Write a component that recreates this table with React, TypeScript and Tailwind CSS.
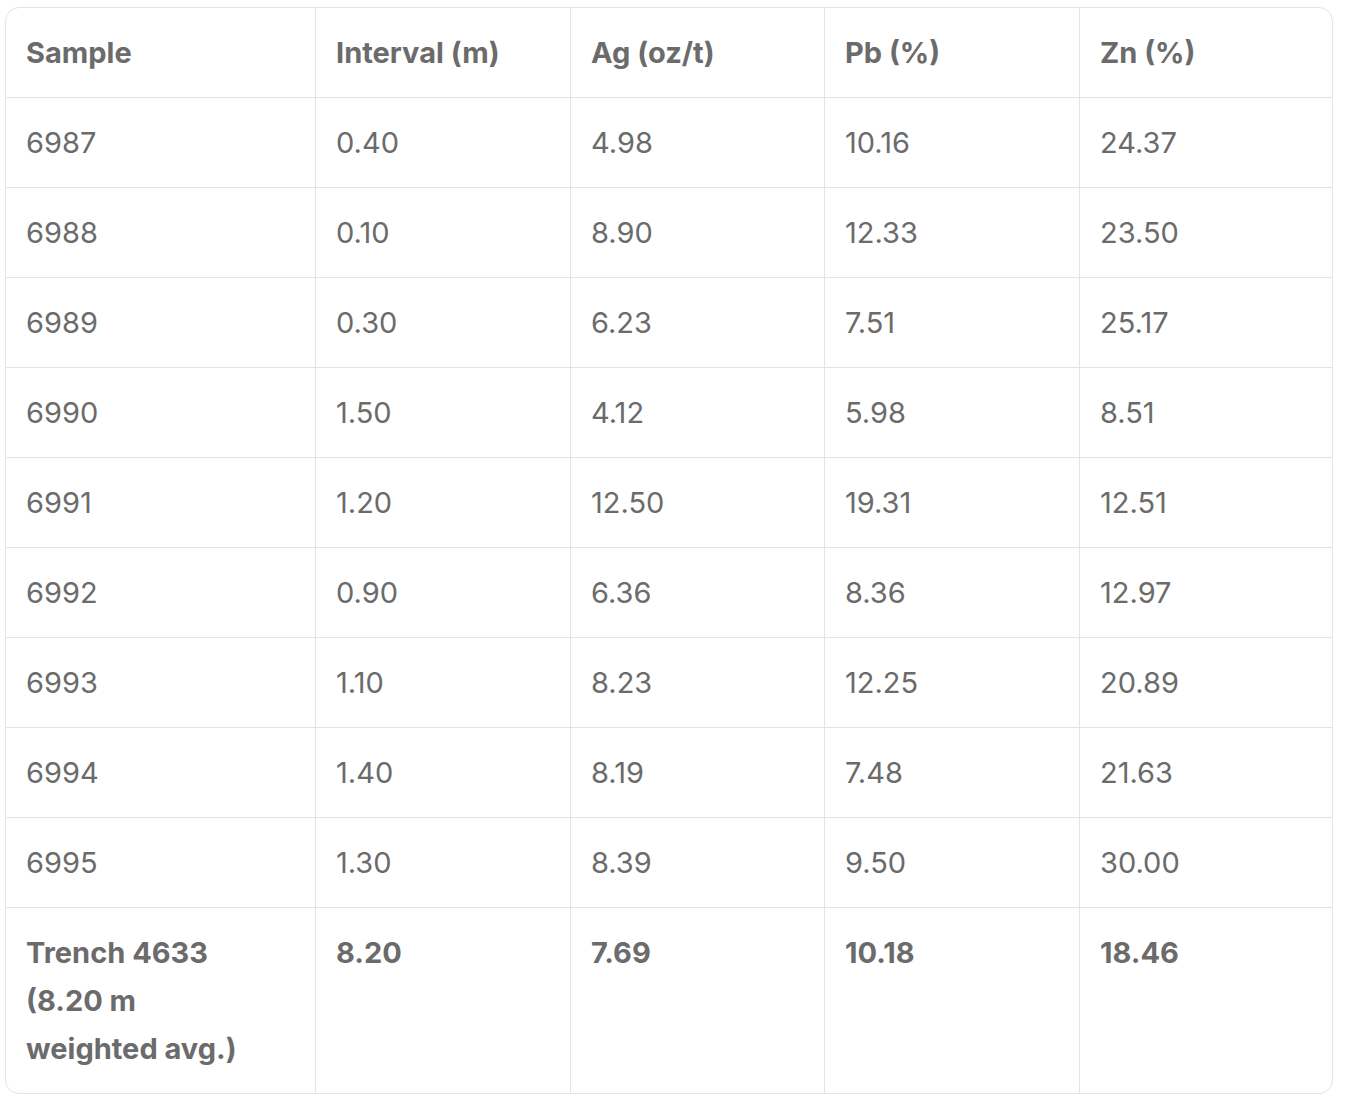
const rows = [
  ["6987", "0.40", "4.98", "10.16", "24.37"],
  ["6988", "0.10", "8.90", "12.33", "23.50"],
  ["6989", "0.30", "6.23", "7.51", "25.17"],
  ["6990", "1.50", "4.12", "5.98", "8.51"],
  ["6991", "1.20", "12.50", "19.31", "12.51"],
  ["6992", "0.90", "6.36", "8.36", "12.97"],
  ["6993", "1.10", "8.23", "12.25", "20.89"],
  ["6994", "1.40", "8.19", "7.48", "21.63"],
  ["6995", "1.30", "8.39", "9.50", "30.00"],
];

const headers = ["Sample", "Interval (m)", "Ag (oz/t)", "Pb (%)", "Zn (%)"];
const widths = ["w-[310px]", "w-[255px]", "w-[254px]", "w-[255px]", "w-[254px]"];

export default function App() {
  return (
    <div className="min-h-screen bg-white pl-[5px] pt-[7px] font-['Inter',sans-serif] text-[#6b6b6b]">
      <div className="w-[1328px] overflow-hidden rounded-[14px] border border-[#e4e4e4]">
        <table className="w-full table-fixed border-separate border-spacing-0 text-left text-[29px] leading-[48px]">
          <thead>
            <tr>
              {headers.map((h, i) => (
                <th
                  key={h}
                  className={`${widths[i]} border-b border-[#e4e4e4] pl-[20px] pt-[21px] pb-[20px] font-bold ${i < 4 ? "border-r" : ""}`}
                >
                  {h}
                </th>
              ))}
            </tr>
          </thead>
          <tbody>
            {rows.map((r) => (
              <tr key={r[0]}>
                {r.map((c, i) => (
                  <td
                    key={i}
                    className={`border-b border-[#e4e4e4] pl-[20px] pt-[21px] pb-[20px] align-top ${i < 4 ? "border-r" : ""}`}
                  >
                    {c}
                  </td>
                ))}
              </tr>
            ))}
            <tr className="font-bold">
              <td className="border-r border-[#e4e4e4] pl-[20px] pt-[21px] pb-[20px] align-top">
                Trench 4633
                <br />
                (8.20 m
                <br />
                weighted avg.)
              </td>
              <td className="border-r border-[#e4e4e4] pl-[20px] pt-[21px] pb-[20px] align-top">8.20</td>
              <td className="border-r border-[#e4e4e4] pl-[20px] pt-[21px] pb-[20px] align-top">7.69</td>
              <td className="border-r border-[#e4e4e4] pl-[20px] pt-[21px] pb-[20px] align-top">10.18</td>
              <td className="pl-[20px] pt-[21px] pb-[20px] align-top">18.46</td>
            </tr>
          </tbody>
        </table>
      </div>
    </div>
  );
}
